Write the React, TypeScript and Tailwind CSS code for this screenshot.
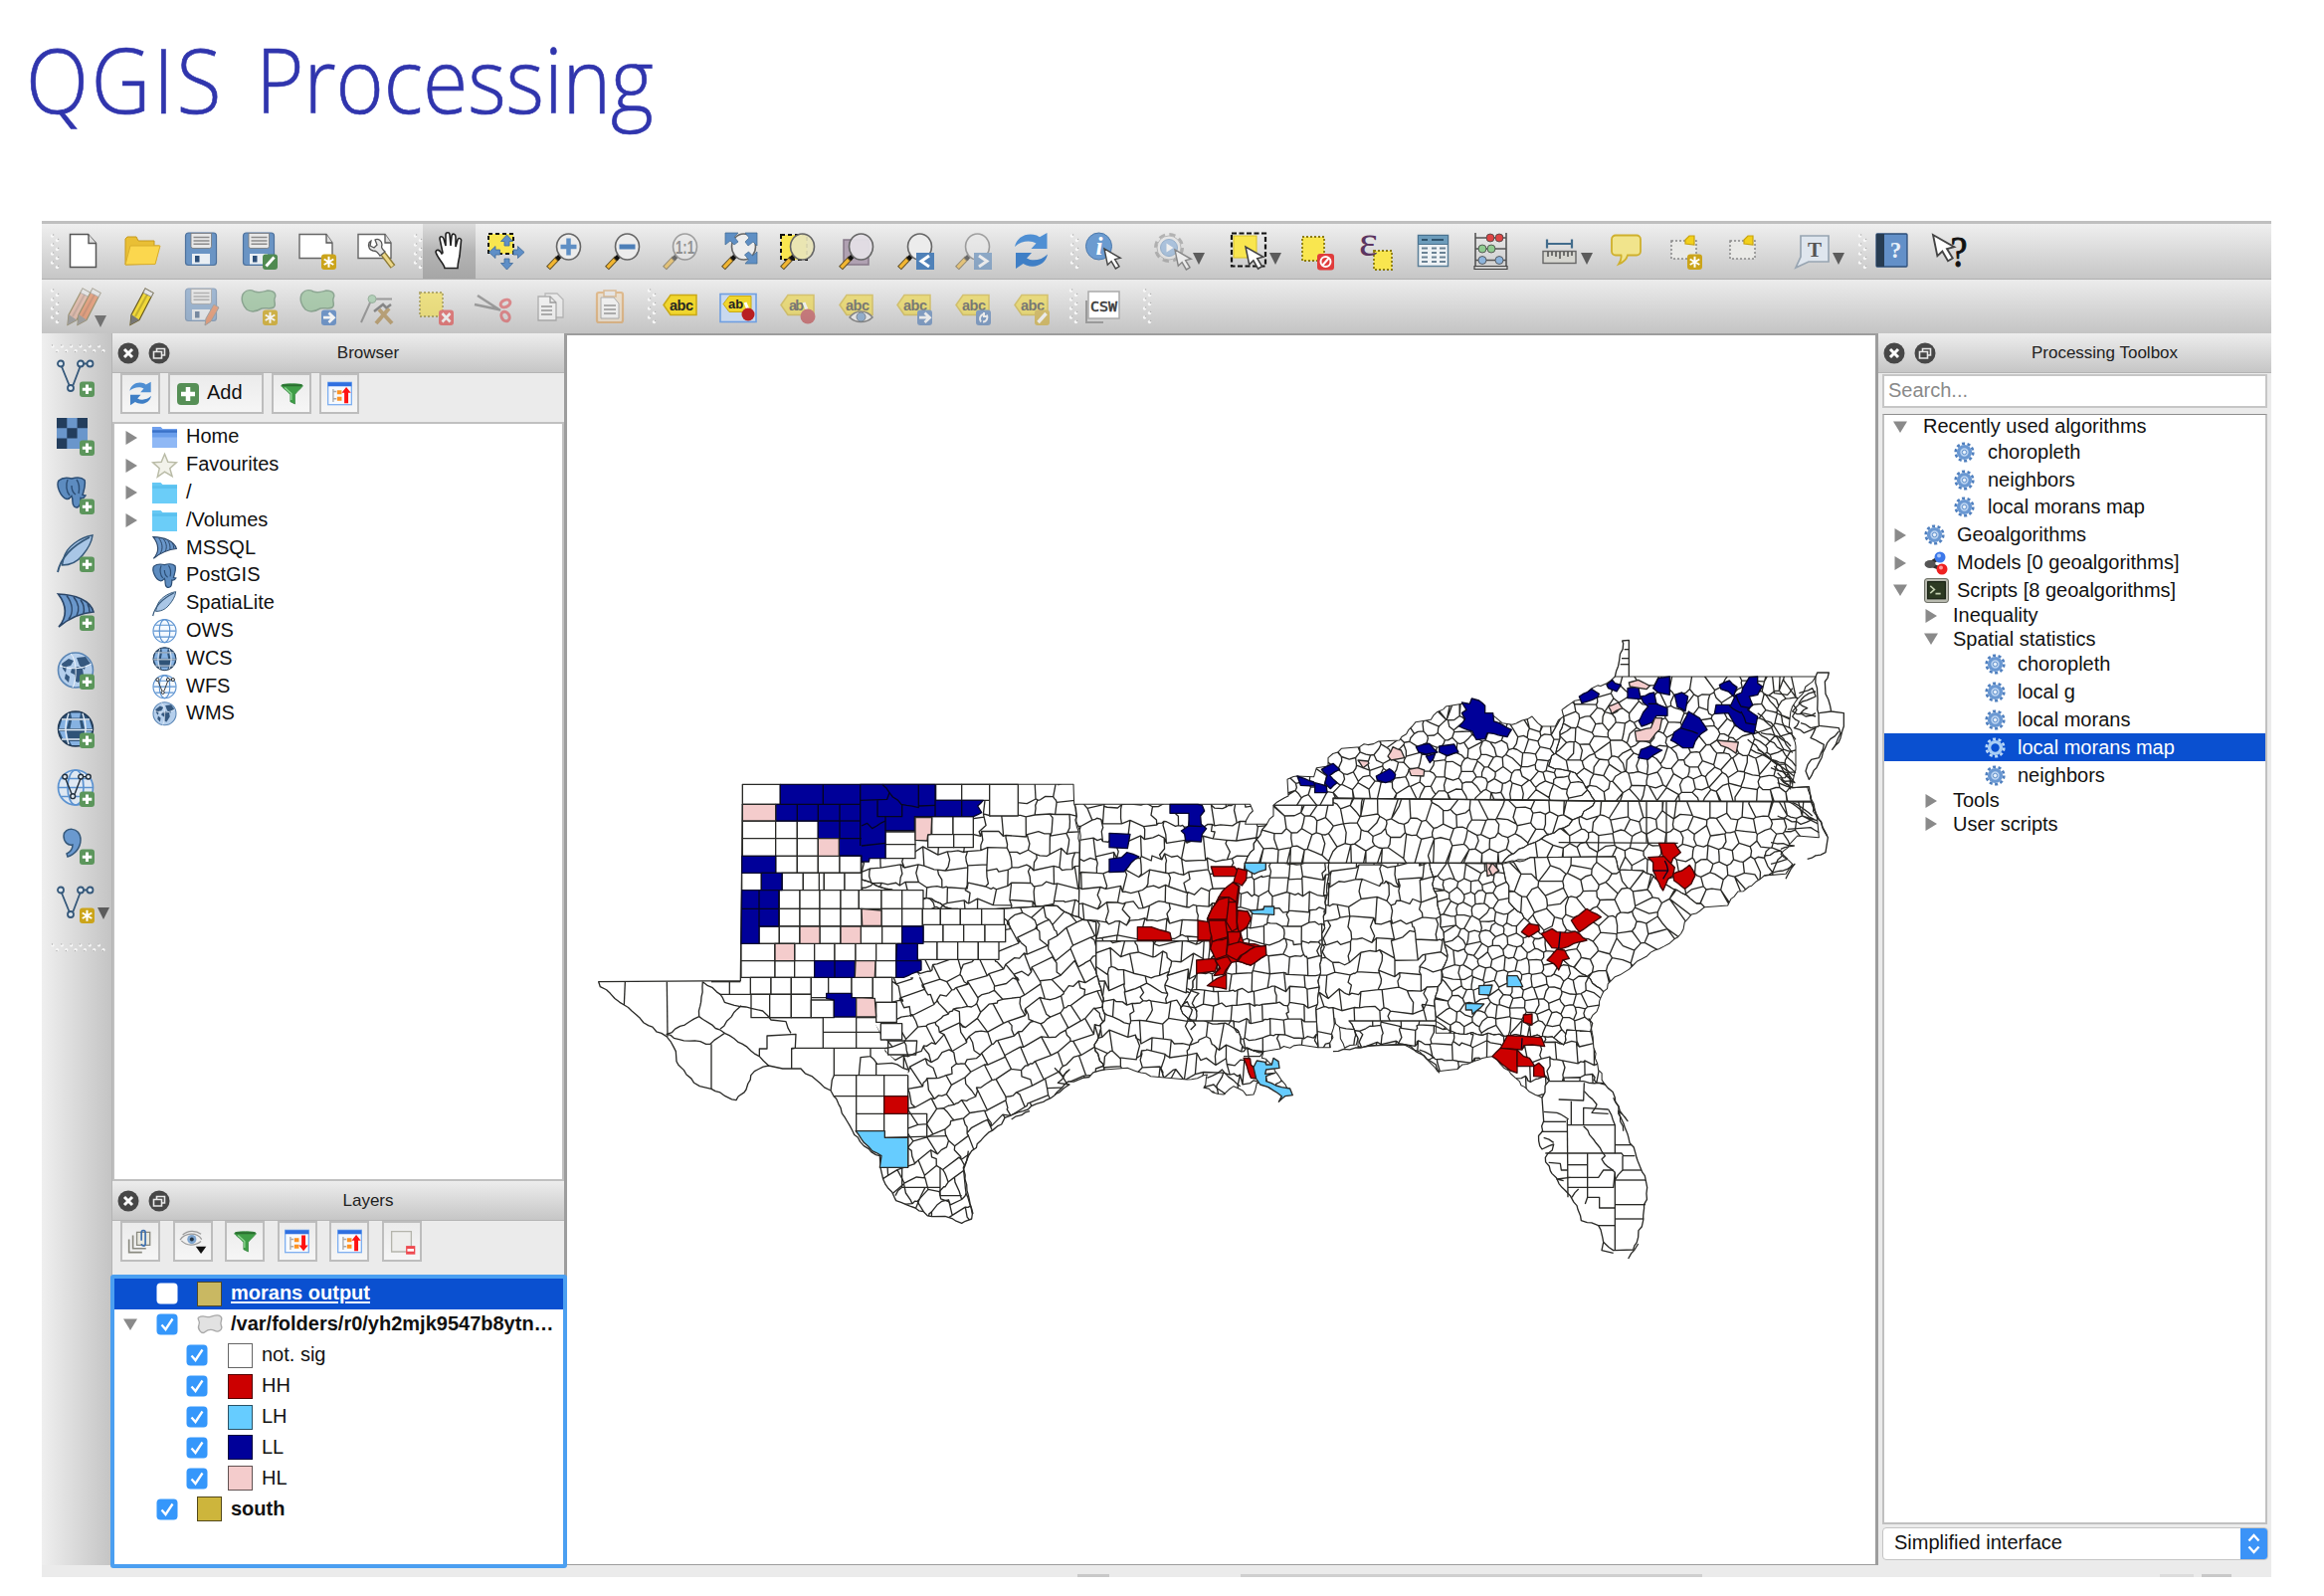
import React from "react";

/* ------------------------------------------------------------------ */
/* Map geometry                                                        */
/* ------------------------------------------------------------------ */

type P = [number, number];

// Sheets of the map: every outline is written in the coordinates of its sheet.
const W: P = [0, 420];
const C: P = [1380, 420];
const N: P = [2730, 0];
const S: P = [2580, 840];

const at = (o: P, s: string): P[] =>
  s.trim().split(/\s+/).map((t) => {
    const [x, y] = t.split(",").map(Number);
    return [x + o[0], y + o[1]] as P;
  });

const hash = (x: number, y: number, k: number) => {
  const v = Math.sin(Math.round(x) * 12.9898 + Math.round(y) * 78.233 + k * 37.719) * 43758.5453;
  return v - Math.floor(v);
};

const f = (n: number) => n.toFixed(1);

// Breaks slanted segments into short wobbling pieces, as rivers and coasts have.
function rough(p: P[], closed = true, amp = 9): string {
  let d = `M${f(p[0][0])} ${f(p[0][1])}`;
  const n = closed ? p.length : p.length - 1;
  for (let i = 0; i < n; i++) {
    const a = p[i];
    const b = p[(i + 1) % p.length];
    const dx = b[0] - a[0];
    const dy = b[1] - a[1];
    const len = Math.hypot(dx, dy);
    if (Math.abs(dx) > 9 && Math.abs(dy) > 9) {
      const k = Math.max(1, Math.round(len / 16));
      for (let j = 1; j < k; j++) {
        const x = a[0] + (dx * j) / k;
        const y = a[1] + (dy * j) / k;
        d += `L${f(x + (hash(x, y, 1) - 0.5) * amp)} ${f(y + (hash(x, y, 2) - 0.5) * amp)}`;
      }
    }
    d += `L${f(b[0])} ${f(b[1])}`;
  }
  return d + (closed ? "Z" : "");
}

const inside = (x: number, y: number, p: P[]) => {
  let r = false;
  for (let i = 0, j = p.length - 1; i < p.length; j = i++) {
    if (p[i][1] > y !== p[j][1] > y && x < ((p[j][0] - p[i][0]) * (y - p[i][1])) / (p[j][1] - p[i][1]) + p[i][0]) r = !r;
  }
  return r;
};

function frame(poly: P[]) {
  const xs = poly.map((q) => q[0]);
  const ys = poly.map((q) => q[1]);
  const cx = (Math.min(...xs) + Math.max(...xs)) / 2;
  const cy = (Math.min(...ys) + Math.max(...ys)) / 2;
  return { cx, cy, r: Math.hypot(Math.max(...xs) - cx, Math.max(...ys) - cy) + 60 };
}

type Grid = [sx: number, sy: number, jit: number, deg: number];

// Irregular counties: Voronoi edges of a jittered, turned grid.
function cells(poly: P[], [sx, sy, jit, deg]: Grid): string {
  const { cx, cy, r } = frame(poly);
  const c = Math.cos((deg * Math.PI) / 180);
  const s = Math.sin((deg * Math.PI) / 180);
  const pts: P[] = [];
  for (let j = -Math.ceil(r / sy); j <= r / sy; j++)
    for (let i = -Math.ceil(r / sx); i <= r / sx; i++) {
      const u = (i + 0.9 * hash(j, 7, 8) + (hash(i, j, 3) - 0.5) * jit) * sx;
      const v = (j + (hash(i, j, 4) - 0.5) * jit) * sy;
      const x = cx + u * c - v * s;
      const y = cy + u * s + v * c;
      if (inside(x, y, poly)) pts.push([x, y]);
    }
  const m = Math.max(sx, sy) * 2.2;
  const seen = new Set<string>();
  let d = "";
  for (const a of pts) {
    let cell: P[] = [[a[0] - m, a[1] - m], [a[0] + m, a[1] - m], [a[0] + m, a[1] + m], [a[0] - m, a[1] + m]];
    for (const b of pts) {
      const dx = b[0] - a[0];
      const dy = b[1] - a[1];
      if (b === a || Math.abs(dx) > 2 * m || Math.abs(dy) > 2 * m) continue;
      const k = (b[0] * b[0] + b[1] * b[1] - a[0] * a[0] - a[1] * a[1]) / 2;
      const side = (q: P) => q[0] * dx + q[1] * dy - k;
      const out: P[] = [];
      for (let i = 0; i < cell.length; i++) {
        const p = cell[i];
        const q = cell[(i + 1) % cell.length];
        const sp = side(p);
        const sq = side(q);
        if (sp <= 0) out.push(p);
        if (sp <= 0 !== sq <= 0) {
          const t = sp / (sp - sq);
          out.push([p[0] + (q[0] - p[0]) * t, p[1] + (q[1] - p[1]) * t]);
        }
      }
      cell = out;
    }
    for (let i = 0; i < cell.length; i++) {
      const p = cell[i];
      const q = cell[(i + 1) % cell.length];
      const len = Math.hypot(p[0] - q[0], p[1] - q[1]);
      if (len < 1) continue;
      const mx = (p[0] + q[0]) / 2;
      const my = (p[1] + q[1]) / 2;
      const key = `${Math.round(mx)},${Math.round(my)}`;
      if (seen.has(key)) continue;
      seen.add(key);
      const w = len > 18 && hash(mx, my, 9) < 0.6 ? len * 0.36 : 0;
      d += `M${f(p[0])} ${f(p[1])}L${f(mx + (hash(mx, my, 5) - 0.5) * w)} ${f(my + (hash(mx, my, 6) - 0.5) * w)}L${f(q[0])} ${f(q[1])}`;
    }
  }
  return d;
}

// Surveyed counties: courses of near-rectangles whose corners are shifted a little.
function courses(poly: P[], [sx, sy, jit, deg]: Grid): string {
  const { cx, cy, r } = frame(poly);
  const c = Math.cos((deg * Math.PI) / 180);
  const s = Math.sin((deg * Math.PI) / 180);
  const nx = Math.ceil(r / sx);
  const ny = Math.ceil(r / sy);
  const place = (u: number, j: number): P => {
    const x = u + (hash(u, j, 11) - 0.5) * jit * sx * 0.5;
    const y = j * sy + (hash(u, j, 12) - 0.5) * jit * sy * 1.1;
    return [cx + x * c - y * s, cy + x * s + y * c];
  };
  const row = (j: number) => {
    const out: number[] = [];
    for (let i = -nx; i <= nx; i++) out.push((i + hash(j, 5, 13) + (hash(i, j, 14) - 0.5) * jit) * sx);
    return out;
  };
  const bend = (a: P, b: P, k: number) => {
    const mx = (a[0] + b[0]) / 2;
    const my = (a[1] + b[1]) / 2;
    const h = hash(mx, my, k);
    if (h > 0.42) return `L${f(b[0])} ${f(b[1])}`;
    const w = Math.hypot(a[0] - b[0], a[1] - b[1]) * 0.34;
    let d = "";
    for (const t of [0.33, 0.66]) {
      const x = a[0] + (b[0] - a[0]) * t;
      const y = a[1] + (b[1] - a[1]) * t;
      d += `L${f(x + (hash(x, y, 15) - 0.5) * w)} ${f(y + (hash(x, y, 16) - 0.5) * w)}`;
    }
    return d + `L${f(b[0])} ${f(b[1])}`;
  };
  let d = "";
  let above = row(-ny - 1);
  for (let j = -ny; j <= ny; j++) {
    const here = row(j);
    const line = [...above, ...here].sort((a, b) => a - b).map((u) => place(u, j));
    d += `M${f(line[0][0])} ${f(line[0][1])}`;
    for (let i = 1; i < line.length; i++) d += bend(line[i - 1], line[i], 17);
    for (const u of here) {
      const a = place(u, j);
      const b = place(u, j + 1);
      d += `M${f(a[0])} ${f(a[1])}${bend(a, b, 18)}`;
    }
    above = here;
  }
  return d;
}

const redRiver = at(W, "828,372 885,395 985,420 1040,430 1080,455 1165,470 1240,460 1330,455 1400,450 1483,485");
const sabine = at(C, "155,500 155,640 170,700 182,780 150,870 180,945");
const texCoast = at(W, "1495,970 1440,990 1400,1030 1330,1065 1260,1090 1250,1110 1200,1145 1160,1190 1135,1240 1140,1290 1162,1380 1160,1395 1130,1408 1080,1387 1040,1388 990,1362 932,1340 893,1275 885,1240");
const missN = at(C, "605,322 600,350 560,400 525,430 490,490 505,557");
const missS = at(C, "505,557 510,600 460,655 440,710 410,760 440,798");
const pearl = at(C, "440,798 570,798 600,880 660,890");
const alGa = at(C, "1160,322 1185,450 1215,600 1175,740 1180,790 1180,835");
const savannah: P[] = [...at(N, "30,745 50,810"), ...at(S, "200,20 270,90 320,130 370,200 430,240 485,290")];
const ncSc = at(N, "130,725 370,722 380,762 455,765 545,820 640,875");
const tnNc = at(N, "30,742 80,700 200,640 270,600 310,555");
const rev = (p: P[]) => [...p].reverse();

const texas: P[] = [
  ...at(W, "469,145 463,677 35,680 40,695 70,715 112,750 160,790 240,845 268,890 270,920 300,960 340,995 375,1003 450,1037 480,1005 505,950 548,933 590,942 645,942 690,975 735,1008 765,1060 800,1128 835,1175 883,1205"),
  ...rev(texCoast),
  ...rev(sabine),
  ...rev(redRiver),
  ...at(W, "824,145"),
];
const texasEast: P[] = [
  ...at(W, "968,1240 968,950 908,900 886,855 872,790 872,740 920,667 1006,667 828,520"),
  ...redRiver,
  ...sabine,
  ...texCoast,
];

type Region = { id: string; p: P[]; fill: (p: P[], g: Grid) => string; g: Grid };

const regions: Region[] = [
  { id: "tx", fill: courses, p: texasEast, g: [64, 50, 0.5, -28] },
  { id: "ok", fill: courses, p: [...at(W, "824,85 1467,85 1469,145 1485,260 1483,485"), ...rev(redRiver)], g: [66, 52, 0.45, 0] },
  { id: "ar", fill: courses, p: [...at(C, "92,145 620,145 628,165 605,205 670,205 640,250 620,290"), ...missN, ...at(C, "155,557 155,500 103,485 107,260")], g: [66, 50, 0.5, 0] },
  { id: "la", fill: courses, p: [...at(C, "155,557"), ...missS, ...pearl, ...at(C, "655,910 690,930 740,1015 640,985 630,1020 608,1022 570,995 540,1020 480,1000 490,960 430,975 370,970 320,965 250,940"), ...rev(sabine)], g: [60, 50, 0.7, 4] },
  { id: "ms", fill: courses, p: [...missN, ...missS, ...pearl, ...at(C, "710,882 770,870 825,878 818,760 835,600 857,322")], g: [54, 48, 0.35, 0] },
  { id: "al", fill: courses, p: [...at(C, "857,322"), ...alGa.slice(0, 5), ...at(C, "1178,798 918,798 945,850 940,870 905,880 875,790 862,878 825,878 818,760 835,600")], g: [66, 54, 0.6, -2] },
  { id: "tn", fill: cells, p: [...at(C, "605,322 620,290 640,250 670,205 690,180 690,148 870,148 870,126"), ...rev(tnNc)], g: [46, 48, 0.65, 10] },
  { id: "ky", fill: cells, p: [...at(C, "690,148 735,120 732,70 760,60 812,62 820,35 855,30 855,5"), [2275, 397], [2330, 392], [2387, 375], [2450, 372], [2499, 317], [2545, 310], [2590, 270], [2640, 262], [2680, 285], ...at(N, "0,295 30,320 60,325 120,300 150,330 190,330 215,300 200,380 170,450 250,470 310,555"), ...at(C, "870,126 870,148")], g: [42, 37, 0.8, 18] },
  { id: "va", fill: cells, p: at(N, "215,300 210,280 235,262 265,250 300,215 345,200 370,180 975,180 940,225 905,270 895,330 915,390 915,460 905,515 950,512 962,556 310,555 250,470 170,450 200,380"), g: [49, 35, 0.85, -28] },
  { id: "nc", fill: cells, p: [...rev(tnNc), ...at(N, "130,725"), ...ncSc, ...at(N, "710,870 720,850 820,780 885,775 905,745 870,715 920,660 985,665 980,610 962,556")], g: [47, 45, 0.65, 0] },
  { id: "sc", fill: cells, p: [...ncSc, ...at(N, "590,910 560,965 490,1005"), ...at(S, "575,210 520,245 485,290"), ...rev(savannah)], g: [58, 44, 0.8, 35] },
  { id: "ga", fill: cells, p: [...at(C, "1160,322"), ...savannah, ...at(S, "465,350 445,375 450,410 375,405 365,450 330,425 40,415"), ...rev(alGa)], g: [38, 36, 0.65, 8] },
  { id: "fl", fill: courses, p: [...at(C, "918,798 1178,798"), ...at(S, "40,415 330,425 365,450 375,405 450,410 460,490 490,570 425,620 320,615 260,590 220,550 150,485"), ...at(C, "1310,915 1230,945 1185,950 1130,890 1080,868 1000,872 945,878 945,850")], g: [54, 52, 0.5, 0] },
];

const florida = at(S, "300,610 305,680 290,740 300,765 335,750 310,790 325,830 360,880 385,905 405,935 418,980 470,995 485,1045 515,1070 575,1068 590,1030 605,980 617,880 610,845 585,790 550,700 520,610 490,570 425,560 320,560 300,610");

// Open county lines, grouped by sheet.
const lines: [P, string][] = [
  [W, "115,680 112,750"], [W, "241,680 243,845"], [W, "349,680 338,785"], [W, "338,785 240,838 262,850 372,868 415,835 338,785"],
  [W, "375,868 375,1003"], [W, "415,835 520,905 548,933"], [W, "402,822 465,752"], [W, "349,680 402,718 415,742 495,760 530,768 555,795 600,800 615,835"],
  [W, "520,905 520,882 543,882 543,843 630,838 628,880 617,882"], [W, "617,880 617,942"], [W, "617,880 908,880"], [W, "745,880 745,962 968,962"],
  [W, "400,718 676,718"], [W, "375,680 463,680"], [W, "430,680 430,718"], [W, "745,962 735,1008"], [W, "745,1025 968,1025"], [W, "812,788 812,880"],
  [W, "712,788 712,880"], [W, "712,832 886,832"], [W, "812,962 812,1130"], [W, "896,962 896,1130"], [W, "812,1078 1025,1078 1025,1148"],
  [W, "898,1150 1085,1145"], [W, "968,962 968,1240"], [W, "855,880 855,905 825,908 820,962"], [W, "855,905 875,928 920,925 968,945"], [W, "872,925 872,960"],
  [W, "955,900 955,940"], [W, "908,858 995,858 992,900 908,900 908,858"], [W, "950,1240 950,1300 1065,1300"],
  [W, "950,1300 930,1325"], [W, "1020,1300 992,1362"], [W, "1065,1240 1065,1325 1130,1325"], [W, "1150,1190 1136,1245 1146,1310 1164,1380"], [W, "1280,1095 1335,1070"],
  [W, "551,788 712,788"], [W, "812,788 872,788"], [W, "588,404 588,352 828,352"], [W, "700,352 700,404"],
  [S, "350,615 425,618 427,565"], [S, "388,620 388,692"], [S, "305,652 345,655 380,675"], [S, "305,682 372,682"], [S, "298,712 376,712"],
  [S, "376,675 378,910"], [S, "376,692 520,692"], [S, "425,692 425,640 500,645"], [S, "427,590 465,630 450,655 500,658"], [S, "425,695 455,735 490,785 480,795 520,835"],
  [S, "500,645 520,692 520,778"], [S, "310,777 540,777 545,785 580,785"], [S, "437,777 437,910 430,930"], [S, "378,812 437,812"], [S, "375,850 470,850 485,828 515,828"],
  [S, "378,880 515,880 520,835"], [S, "520,835 520,1070"], [S, "520,858 612,858"], [S, "520,932 612,932"], [S, "520,975 607,975"], [S, "437,910 473,910 473,942 520,942"],
  [S, "470,995 520,995"], [S, "543,785 543,828 520,858"], [S, "543,828 600,828"], [S, "522,752 570,752"], [S, "320,805 355,808 358,828 378,828"], [S, "365,860 345,855 385,850"], [S, "390,910 410,885"],
  [S, "515,610 535,650 558,680 530,650 545,710"], [S, "560,1095 590,1050"], [S, "485,1045 480,1070 515,1078"], [S, "305,730 335,745"], [S, "440,370 452,385 446,410"],
  [N, "370,180 395,80 392,72 412,70 412,180"], [N, "398,98 412,98"], [N, "390,125 412,125"], [N, "386,143 412,143"],
  [N, "975,180 980,168 1015,168 1003,195 1005,232 1022,285 1060,290 1060,330 1050,365 1025,400 1050,350 1045,335 985,328 975,180"],
  [N, "985,290 1022,285"], [N, "1045,345 1010,380 985,440 955,490 945,465 962,430 985,425 1000,385 960,365 975,335 940,350 910,335 925,315 905,300 918,280 908,265"],
  [N, "975,225 940,240 925,260 950,275 930,290 975,300"], [N, "905,515 955,512 962,560 985,610 1012,665 1005,710 950,730"], [N, "958,530 975,590 1010,660"], [N, "890,555 970,610"], [N, "905,560 940,580 965,600"],
  [N, "820,780 890,760 912,745 885,790"], [N, "820,230 870,290 880,330 915,370"], [N, "800,290 850,330 905,410"], [N, "790,340 850,380 915,450"], [N, "770,370 830,420 910,480"], [N, "800,400 870,450 905,505"],
  [N, "850,450 900,490"], [N, "860,470 900,520"], [N, "845,180 850,230 890,235 905,215"],
  [N, "840,455 890,470 912,500 870,490 905,515 860,500"], [N, "780,400 840,430 880,440 915,470"], [N, "810,350 860,360 900,390"], [N, "925,230 965,215 975,240 935,255 905,285 945,300 975,290"], [N, "930,320 960,335 985,330"],
  [N, "820,720 870,705 890,730 840,745"], [N, "840,680 910,690 870,700"], [N, "890,640 960,635 985,650"], [N, "860,600 930,625 965,610"],
  [N, "0,550 310,555 962,558"], [N, "465,555 465,680"], [N, "525,558 525,680"], [N, "200,680 560,682"],
  [C, "1165,322 1380,322"], [C, "870,128 1380,131"], [C, "870,890 1000,872 1090,870 1180,930 1190,955"], [C, "1130,885 1175,910"],
  [C, "480,998 510,990 545,1018"], [C, "30,1020 75,990 40,985 75,945 55,965 30,940"],
  [C, "660,890 650,905 600,905"], [C, "490,970 535,945 590,995"],
  [C, "410,760 430,740 445,765 435,790 455,810 440,825"], [C, "430,700 465,715 445,745 460,770"],
];

// White counties of the ruled western rows: y range, then the x of each border.
const rows: [number, number, number[]][] = [
  [85, 145, [469, 583]],
  [195, 248, [469, 569, 634, 697]],
  [248, 301, [469, 569, 634, 697]],
  [301, 352, [569, 634, 697, 762, 826]],
  [352, 404, [467, 526]],
  [352, 404, [588, 652, 715, 777, 828]],
  [404, 460, [580, 642, 702, 765, 820]],
  [404, 460, [820, 888, 950, 1014]],
  [460, 513, [580, 642, 702, 765, 828]],
  [460, 513, [888, 950, 1012, 1066, 1126, 1190, 1258]],
  [508, 560, [1014, 1074, 1136, 1200, 1262]],
  [513, 565, [519, 580, 642, 702, 765, 826, 890, 950]],
  [565, 617, [465, 567, 626, 686, 747, 810, 872, 932]],
  [560, 613, [997, 1056, 1118, 1180, 1242]],
  [617, 667, [465, 567, 626, 686]],
  [617, 667, [870, 932]],
  [667, 718, [493, 555, 616, 676]],
  [667, 728, [676, 728, 798, 862]],
  [667, 742, [862, 920]],
  [718, 788, [495, 551, 616, 676]],
  [735, 788, [676, 745]],
  [742, 802, [872, 934]],
  [806, 855, [886, 950]],
  [182, 228, [900, 990]],
  [228, 266, [900, 990]],
  [266, 308, [900, 990]],
  [85, 133, [1052, 1130, 1214]],
  [85, 180, [1214, 1300]],
  [182, 236, [1040, 1104, 1165]],
  [236, 275, [1028, 1106, 1165]],
];

const BLUE = "#000099";
const RED = "#cc0000";
const SKY = "#66ccff";
const PINK = "#f4cccc";

const areas: [string, P, string][] = [
  [BLUE, W, "583,85 1050,85 1050,133 1195,133 1178,150 1190,170 1165,182 988,182 988,224 900,224 900,308 852,308 850,318 828,318 828,300 760,300 760,248 697,248 697,195 569,195 569,145 583,145"],
  [BLUE, W, "467,301 569,301 569,352 467,352"], [BLUE, W, "526,352 588,352 588,404 526,404"],
  [BLUE, W, "467,404 578,404 578,513 519,513 519,565 465,565"], [BLUE, W, "950,513 1014,513 1014,565 950,565"],
  [BLUE, W, "935,565 997,565 997,617 932,617"], [BLUE, W, "932,617 1008,617 1008,645 955,667 932,667"],
  [BLUE, W, "686,617 808,617 808,667 686,667"], [BLUE, W, "722,715 798,715 798,728 812,728 812,786 745,786 745,735 722,730"],
  [PINK, W, "469,145 569,145 569,195 469,195"], [PINK, W, "697,248 760,248 760,301 697,301"], [PINK, W, "990,185 1040,185 1038,235 1028,237 1026,255 990,253"],
  [PINK, W, "828,460 888,465 888,511 830,511"], [PINK, W, "642,513 702,513 702,565 642,565"], [PINK, W, "765,513 826,513 826,565 765,565"],
  [PINK, W, "567,565 626,565 626,617 567,617"], [PINK, W, "810,617 870,617 868,667 808,667"], [PINK, W, "812,728 868,730 872,786 812,786"],
  [RED, W, "896,1025 968,1025 968,1078 896,1078"],
  [SKY, W, "810,1130 898,1130 898,1150 968,1150 968,1240 883,1240 888,1205 860,1190 835,1165"],

  [BLUE, C, "378,145 462,145 475,148 482,165 470,180 472,205 488,218 475,235 472,258 425,255 422,235 412,225 435,210 435,172 378,172"],
  [BLUE, C, "195,232 258,235 250,278 195,275"], [BLUE, C, "195,310 232,305 248,290 285,303 262,320 240,348 195,350"],
  [BLUE, C, "762,60 785,68 812,78 815,90 772,88"], [BLUE, C, "815,80 850,90 852,110 815,110"], [BLUE, C, "835,40 870,22 890,40 860,58 882,80 862,98 845,82 852,58"],
  [BLUE, C, "1000,60 1040,38 1058,55 1055,68 1028,80 1003,72"], [BLUE, C, "1150,0 1178,-8 1172,8 1162,20"], [BLUE, C, "1120,-28 1160,-38 1185,-12 1150,-6 1128,-12"], [BLUE, C, "1190,-30 1235,-36 1248,-12 1215,-2 1190,-12"],
  [PINK, C, "945,12 975,15 978,22 960,35"], [PINK, C, "1035,0 1050,-28 1075,-18 1085,5 1045,12"], [PINK, C, "1098,40 1125,35 1145,42 1143,60 1105,58"], [PINK, C, "1332,322 1350,325 1370,345 1335,362"],
  [RED, C, "495,480 525,425 555,415 568,380 588,392 580,465 612,468 622,490 608,518 590,530 600,562 667,573 668,600 622,630 582,618 563,622 545,658 520,650 530,630 500,580 495,530"],
  [RED, C, "502,333 572,333 582,345 576,362 510,362"], [RED, C, "582,338 610,345 608,372 595,390 570,380"],
  [RED, C, "568,380 585,392 578,440 555,425 525,425 535,408"], [RED, C, "555,425 555,492 492,492 502,465 525,432"],
  [RED, C, "555,440 578,440 580,520 565,528 548,500"], [RED, C, "582,465 612,468 622,490 610,515 585,530 580,500"],
  [RED, C, "462,495 495,500 505,530 500,555 462,555"], [RED, C, "495,495 545,495 552,545 505,560"], [RED, C, "552,530 590,530 590,545 580,568 555,570"],
  [RED, C, "505,560 552,548 548,600 515,612 500,580"], [RED, C, "552,570 590,560 635,575 590,602 580,615 548,598"], [RED, C, "635,575 667,572 668,600 622,630 582,618 595,600"],
  [RED, C, "458,615 512,610 520,628 515,648 458,655"], [RED, C, "515,615 552,605 563,622 540,658 510,662 530,640"], [RED, C, "548,658 548,702 490,692 520,670"],
  [RED, C, "280,515 322,515 378,532 383,555 280,555"], [RED, C, "600,910 620,912 622,930 632,940 638,972 622,970 610,935"],
  [SKY, C, "603,322 667,322 667,342 632,355 605,340"], [SKY, C, "618,465 660,462 662,453 692,453 692,478 628,475"],
  [SKY, C, "630,938 640,918 665,922 668,930 685,930 690,910 705,920 708,940 668,945 665,958 695,955 668,965 668,980 715,998 740,1002 748,1022 725,1025 706,1042 715,1025 675,998 650,990 638,972"],
  [SKY, C, "1310,692 1350,690 1342,720 1310,718"], [SKY, C, "1270,745 1325,747 1290,778 1288,765 1270,765"], [SKY, C, "1395,662 1425,662 1442,695 1395,695"],

  [BLUE, N, "-92,258 -68,262 -62,246 -40,252 -22,268 -22,290 2,290 5,315 30,325 58,340 45,362 5,352 -15,350 -22,368 -48,370 -60,345 -100,330 -82,308 -92,290 -78,280"],
  [BLUE, N, "262,240 300,218 322,232 318,242 270,260"], [BLUE, N, "345,205 362,190 370,200 388,205 375,225 350,215"],
  [BLUE, N, "485,215 500,185 535,180 535,235 500,228"], [BLUE, N, "408,215 440,210 448,248 408,245"],
  [BLUE, N, "448,240 488,228 495,262 528,275 528,298 495,298 482,318 450,330 442,315 455,288 470,270 455,258"], [BLUE, N, "550,235 572,228 590,240 582,285 558,272"],
  [BLUE, N, "592,285 625,305 648,340 630,352 612,375 605,395 575,395 538,372 548,348 568,335"], [BLUE, N, "440,425 448,400 478,388 512,402 498,410 470,430"],
  [BLUE, N, "685,205 715,192 738,212 728,240 712,225 690,218"], [BLUE, N, "755,215 775,182 800,180 800,200 815,210 800,235 775,240 785,265 770,280 800,300 795,325 790,352 760,345 735,328 712,290 670,292 675,265 720,265 735,235 752,228"],
  [PINK, N, "412,198 440,190 475,208 465,218 415,210"], [PINK, N, "350,270 380,258 392,275 360,292"], [PINK, N, "430,345 478,335 490,305 512,305 505,340 475,375 435,375"],
  [PINK, N, "678,372 742,378 735,412 710,395 690,388"], [PINK, N, "0,742 20,765 0,780 -10,760"],
  [RED, N, "502,682 550,682 568,710 545,728 540,742 520,735"], [RED, N, "470,725 518,722 535,740 550,755 545,780 530,790 515,825 495,790 485,765 485,740"], [RED, N, "545,775 572,765 595,748 612,780 600,805 580,820 548,795"],
  [RED, N, "238,915 285,880 328,905 262,950"], [RED, N, "88,950 110,925 140,930 142,945 110,965"],
  [RED, S, "298,115 330,100 345,110 378,112 400,108 435,135 395,145 360,160 330,158"], [RED, S, "345,162 368,165 382,190 362,195 350,225 335,205 315,195"],
  [RED, S, "244,360 270,357 270,390 255,385 244,382"], [RED, S, "195,422 298,428 308,455 270,450 245,452 240,465 175,460"], [RED, S, "175,460 225,465 225,535 205,528 150,485"], [RED, S, "225,465 245,485 262,490 278,515 225,515"], [RED, S, "275,515 290,505 305,520 308,547 275,545"],
];

// Borders inside the filled groups.
const inner: [P, string][] = [
  [W, "712,85 712,145"], [W, "583,145 824,145"], [W, "634,145 634,195"], [W, "697,145 697,195 762,195 762,145"], [W, "762,195 762,248 828,248"], [W, "824,85 824,270"], [W, "762,195 824,195"],
  [W, "824,133 905,130 912,110 890,85"], [W, "912,110 948,145 1000,155 1000,85"], [W, "876,133 876,182 950,182 950,145"], [W, "1000,150 1050,148"], [W, "1050,133 1050,182"], [W, "1130,133 1130,182"], [W, "828,210 845,202 860,218 900,195"], [W, "900,182 900,224"], [W, "828,270 900,262"],
  [W, "519,404 519,513"], [W, "467,460 578,460"], [W, "747,617 747,667"],
  [C, "435,210 475,212"], [N, "568,335 620,352"], [N, "470,262 500,262"], [N, "735,235 750,270 778,275"], [N, "750,285 765,320 795,325"], [N, "715,268 750,290"], [N, "485,765 530,765"], [N, "520,735 530,765 515,790"], [S, "355,110 350,160"], [S, "240,430 238,462"],
];

const INK = "#2a2a27";

function SouthMap() {
  return (
    <svg className="block h-[1235px] w-[1315px]" viewBox="-60 -849 3945 3705" fill="none" stroke={INK} strokeWidth="4" strokeLinejoin="round">
      <defs>
        {regions.map((r) => (
          <clipPath key={r.id} id={`clip-${r.id}`}>
            <path d={rough(r.p)} />
          </clipPath>
        ))}
      </defs>
      {regions.map((r) => (
        <g key={r.id}>
          <path d={r.fill(r.p, r.g)} clipPath={`url(#clip-${r.id})`} />
          {r.id !== "tx" && <path d={rough(r.p)} strokeWidth="3.2" />}
        </g>
      ))}
      <path d={rough(texas)} />
      <path d={rough(florida)} fill="#fff" />
      {rows.map(([y0, y1, xs], i) =>
        xs.slice(1).map((x, j) => <rect key={`${i}-${j}`} x={xs[j]} y={y0 + 420} width={x - xs[j]} height={y1 - y0} fill="#fff" />)
      )}
      {lines.map(([o, s], i) => (
        <path key={i} d={rough(at(o, s), false, 6)} />
      ))}
      {areas.map(([c, o, s], i) => (
        <path key={i} d={rough(at(o, s), true, 3)} fill={c} stroke={c === PINK || c === SKY ? INK : c === RED ? "#3d0505" : "#05052c"} />
      ))}
      {inner.map(([o, s], i) => (
        <path key={i} d={rough(at(o, s), false, 4)} stroke="#050520" />
      ))}
    </svg>
  );
}

/* ------------------------------------------------------------------ */
/* Icons                                                               */
/* ------------------------------------------------------------------ */

type Kids = { children?: React.ReactNode };

const Ic = ({ children, dim }: Kids & { dim?: boolean }) => (
  <svg className={dim ? "block size-[38px] shrink-0 overflow-visible opacity-55" : "block size-[38px] shrink-0 overflow-visible"} viewBox="0 0 38 38" fill="none">
    {children}
  </svg>
);

const Badge = ({ c, children }: Kids & { c: string }) => (
  <g transform="translate(23 22.5)">
    <rect width="15" height="15.5" rx="3" fill={c} />
    {children}
  </g>
);
const Plus = () => (
  <Badge c="#5c965c">
    <path d="M7.5 3v9.5M2.8 7.7h9.5" stroke="#fff" strokeWidth="3" />
  </Badge>
);
const Star = () => (
  <Badge c="#cba41a">
    <path d="M7.5 2.2v11M2.7 5l9.6 5.5M12.3 5l-9.6 5.5" stroke="#fff" strokeWidth="2" />
  </Badge>
);
const Lens = ({ children, fill = "#ececec" }: Kids & { fill?: string }) => (
  <>
    <path d="M3 36.5 13 26" stroke="#5b4a22" strokeWidth="5.4" />
    <path d="M3.6 35.8 11 28" stroke="#f2b632" strokeWidth="3.4" />
    <path d="M12 27.5l4-4.5" stroke="#111" strokeWidth="4.4" />
    <ellipse cx="23.5" cy="15" rx="12" ry="13" fill={fill} stroke="#666" strokeWidth="1.6" />
    {children}
  </>
);
const Disk = () => (
  <>
    <rect x="3.5" y="1" width="31" height="32.5" rx="3" fill="#6a94c4" stroke="#4d719c" strokeWidth="1.2" />
    <path d="M9 1.5h20.500v13a2 2 0 0 1-2 2h-16.500a2 2 0 0 1-2-2z" fill="#e8e8e8" stroke="#777" strokeWidth=".8" />
    <path d="M11.500 5.500h16M11.500 9h16M11.500 12.300h16" stroke="#8a8a8a" strokeWidth="1.500" />
    <path d="M10 22h18v10.500h-18z" fill="#e9eef3" />
    <path d="M13 24h4.500v6.500h-4.500z" fill="#2d4f78" />
  </>
);
const Page = () => (
  <>
    <path d="M1 2.500h27l6 8.500v15.500h-33z" fill="#fff" stroke="#666" strokeWidth="1.400" />
    <path d="M28 2.500v8.500h6" fill="#ddd" stroke="#555" strokeWidth="1.300" />
  </>
);
const Pointer = ({ x, y, s = 1 }: { x: number; y: number; s?: number }) => (
  <path transform={`translate(${x} ${y}) scale(${s})`} d="M0 0l3.500 17 4-3.800 4.500 7.800 3.800-2.200-4.600-7.600 5.800-1.400z" fill="#fff" stroke="#444" strokeWidth="1.500" />
);
const YBox = ({ x = 2, y = 2, w = 24, h = 24, c = "#f9e64f", s = "#8a7a10" }) => (
  <rect x={x} y={y} width={w} height={h} fill={c} stroke={s} strokeWidth="1.800" strokeDasharray="2 2" />
);
const Refresh = () => (
  <>
    <path d="M2 15C4 5 14 0 24 3.500l3 1.800L34.500 1v16H18.500l5-5.500C18 8 8 9 2 15z" fill="#4f8fd3" />
    <path d="M35 22.500c-2 10-12 14.500-21.500 11l-3-1.500-7.500 5V21h16l-5 5.500c6 3.500 15 2 21-4z" fill="#3f7fc6" />
  </>
);
const V = ({ c = "#35587a" }) => (
  <g stroke={c} strokeWidth="1.800">
    <path d="M5 7.500 12.500 26M16.500 26l7-18.500M27 4.500h4" />
    <circle cx="4" cy="4.500" r="3" fill="#dfe7ee" />
    <circle cx="24" cy="4.500" r="3" fill="#dfe7ee" />
    <circle cx="33.500" cy="4.500" r="3" fill="#dfe7ee" />
    <circle cx="14" cy="29" r="3" fill="#dfe7ee" />
  </g>
);
const Elephant = () => (
  <>
    <path d="M2 4c4-3.500 9-3 13-2 5-1.500 10-1.500 13 1.500 1.500 5-1 11-2 15l3 .5c-1 2-3 3-5 2.500 0 4 .5 7-2.500 9-3 1.500-5.500-1-5.500-5 0-3-.5-5-1-6-2 2.500-3 3.500-5 3C4 21-1 9 2 4z" fill="#5d8cc0" stroke="#2b4d74" strokeWidth="1.500" />
    <path d="M11 3c-2 5-1.500 12 2 16M20 3c3 4 3 9 2 14M15 9c0 4 1 7 4 9" stroke="#2b4d74" strokeWidth="1.400" />
  </>
);
const Feather = () => (
  <>
    <path d="M36 1C24 3 10 12 7 24c-1 3-1 5-1.500 7C16 31 22 26 26 21c5-6 9-12 10-20z" fill="#a9c6e6" stroke="#35587a" strokeWidth="1.500" />
    <path d="M1 38c3-14 14-26 32-35" stroke="#35587a" strokeWidth="1.900" />
  </>
);
const Shark = () => (
  <>
    <path d="M1.500 1C18 1.500 34 7 37 19c-13 1-24 6-35 15C11 24 10 12 1.500 1z" fill="#6a97cb" stroke="#2b4668" strokeWidth="1.700" />
    <path d="M10 2.500c6 8 7 17 2 24M17 4c5 6 6 13 3 19M24 7c3 4 4 9 3 13.500M31 11c1.500 2.500 2 5 2 8" stroke="#2b4668" strokeWidth="1.500" />
  </>
);
const GlobeGrid = ({ c = "#5b92d0", fill = "#dce9f8" }) => (
  <g stroke={c} strokeWidth="1.700">
    <circle cx="19" cy="18.500" r="17.500" fill={fill} />
    <ellipse cx="19" cy="18.500" rx="8" ry="17.500" />
    <path d="M2 18.500h34M5 9.500h28M5 27.500h28" />
  </g>
);
const GlobeDark = () => (
  <>
    <circle cx="19" cy="18.500" r="17.500" fill="#2f5378" stroke="#223a55" strokeWidth="1.500" />
    <path d="M5 10h7l-2 8H2.500zM15 10h8l1.500 8h-11zM26 10h7l2.500 8H28zM3 21h7l1.500 7H6zM28 21h7l-3 7h-5.500zM14 2.500h10l-1 5h-8zM13 31h12l-2 4h-8z" fill="#86b2e2" />
    <path d="M2 19.500h34M5 9h28M5 29h28M12 3c-4 10-4 21 0 31M26 3c4 10 4 21 0 31" stroke="#e6eef6" strokeWidth="1.400" />
  </>
);
const GlobeLand = () => (
  <>
    <circle cx="19" cy="18.500" r="17.500" fill="#b5cfec" stroke="#5b86b5" strokeWidth="1.600" />
    <path d="M5 12l7-5 5 2-3 5-4 1-1 6-3-4zM15 17l6-2 5 2 1 6-5 8-3-1-1-7-4-2zM20 6l9-1 5 7-5 2-1 4-5-4zM9 22l4 3-1 6-4-4z" fill="#35587f" />
    <path d="M14 2c6 5 7 25 2 34M3 14c10 4 22 4 32-2" stroke="#eef5fc" strokeWidth="1" />
  </>
);
const Funnel = () => (
  <>
    <path d="M2.500 7c0-4 33-4 33 0 0 2-12 12-12 14v14l-7-3.500V21c0-2-14-12-14-14z" fill="#3f9e47" stroke="#2b7f35" strokeWidth="1" />
    <path d="M4 6.500h30" stroke="#2a6e30" strokeWidth="3" />
    <path d="M8 10l10 9v10" stroke="#8fd694" strokeWidth="2" />
  </>
);
const TreeIc = ({ up }: { up?: boolean }) => (
  <>
    <rect x="1" y="2" width="36" height="34" fill="#f7faff" stroke="#7fb0f0" strokeWidth="2" />
    <path d="M1 2h36v6H1z" fill="#2f6fe0" />
    <path d="M9 12v20M9 16h5M9 27h5" stroke="#aaa" strokeWidth="2" />
    <path d="M15 14h7v6h-7zM15 24h7v6h-7z" fill="#ff9320" />
    {up ? <path d="M29 9l7 9h-4v16h-6V18h-4z" fill="#f11" /> : <path d="M29 34l7-9h-4V10h-6v15h-4z" fill="#f11" />}
  </>
);
const Tag = ({ t = "abc" }) => (
  <>
    <path d="M3 17.500 10 7.500h26v20H10z" fill="#f0d62e" stroke="#c9a916" strokeWidth="1.500" />
    <text x={t === "abc" ? 9 : 11} y="23" fontSize="14.500" fontWeight="bold" fill="#2a2a22" textLength={t === "abc" ? 24 : 15} fontFamily="Liberation Sans, sans-serif">
      {t}
    </text>
  </>
);
const Blob = () => (
  <path d="M3 7c3-5 8-5 12-3 5 2 9 0 13-1 7 0 9 4 7 8-1 3 2 7-1 9-4 2-8 0-12 1-5 3-11 4-15 1C3 18 1 12 3 7z" fill="#90bf94" stroke="#61886a" strokeWidth="1.500" />
);
const Pencil = ({ x = 0, c = "#f0d83a" }) => (
  <g transform={`translate(${x} 0)`}>
    <path d="M21 1l8 4.500-14 27-9 5 1-10z" fill={c} stroke="#6b5b20" strokeWidth="1.200" />
    <path d="M7 27l8 5.500-9 5z" fill="#777" />
    <path d="M21 1l8 4.500-2 3.800-8-4z" fill="#e6e6e6" stroke="#888" strokeWidth=".8" />
    <path d="M23 7l-12 22" stroke="#00000030" strokeWidth="2" />
  </g>
);

const Gear = ({ light }: { light?: boolean }) => (
  <svg className="block size-[21px] shrink-0" viewBox="0 0 21 21" fill="none">
    <circle cx="10.500" cy="10.500" r="8.800" stroke={light ? "#bcd8f6" : "#4f7fbe"} strokeWidth="2.600" strokeDasharray="3.100 2.430" />
    <circle cx="10.500" cy="10.500" r="5.900" fill={light ? "#0a50d0" : "#b9d2f0"} stroke={light ? "#a8cdf5" : "#6a98d2"} strokeWidth="3.400" />
    <circle cx="10.500" cy="10.500" r="2.200" fill={light ? "#0a50d0" : "#e8f1fb"} stroke={light ? "none" : "#5e8fcc"} />
  </svg>
);

const Drop = ({ className = "" }) => (
  <svg className={`block h-[12px] w-[12px] shrink-0 ${className}`} viewBox="0 0 12 12">
    <path d="M0 0h12L6 12z" fill="#5c5c5c" />
  </svg>
);
const Grip = ({ className = "" }) => (
  <svg className={`block h-[38px] w-[10px] shrink-0 ${className}`} viewBox="0 0 10 38">
    {[1, 10, 19, 28].map((y) => (
      <g key={y}>
        <circle cx="2.500" cy={y + 2} r="1.700" fill="#f8f8f8" />
        <circle cx="3.500" cy={y + 1} r=".8" fill="#b0b0b0" />
        <circle cx="7.500" cy={y + 6.500} r="1.700" fill="#f8f8f8" />
        <circle cx="8.500" cy={y + 5.500} r=".8" fill="#b0b0b0" />
      </g>
    ))}
  </svg>
);
const HGrip = () => (
  <svg className="block h-[10px] w-[56px]" viewBox="0 0 56 10">
    {[0, 1, 2, 3, 4, 5].map((i) => (
      <g key={i}>
        <circle cx={3 + i * 9.300} cy="3" r="1.600" fill="#f8f8f8" />
        <circle cx={2.500 + i * 9.300} cy="2" r=".7" fill="#aaa" />
        <circle cx={7.500 + i * 9.300} cy="7.500" r="1.600" fill="#f8f8f8" />
        <circle cx={7 + i * 9.300} cy="8.500" r=".7" fill="#aaa" />
      </g>
    ))}
  </svg>
);

/* ------------------------------------------------------------------ */
/* Toolbars                                                            */
/* ------------------------------------------------------------------ */

const serif = "Liberation Serif, serif";
const sans = "Liberation Sans, sans-serif";

function MainToolbar() {
  return (
    <div className="flex h-[55px] items-center bg-linear-to-b from-[#efefef] to-[#c6c6c6] pl-2">
      <Grip />
      <div className="mb-[2px] ml-[5px] flex gap-[20.800px]">
        <Ic>
          <path d="M5.500 2.500h18l8 9V35.500h-26z" fill="#fff" stroke="#555" strokeWidth="1.500" />
          <path d="M24 2.500v9h7.500" fill="#ddd" stroke="#555" strokeWidth="1.400" />
        </Ic>
        <Ic>
          <path d="M2 33V7l2-2h9l2 4h16v5h5l-4 18z" fill="#e9bf35" stroke="#c69a20" strokeWidth="1" />
          <path d="M2 33l5-19h30l-5 18.500z" fill="#fbd74e" stroke="#d8ae2c" strokeWidth="1" />
        </Ic>
        <Ic><Disk /></Ic>
        <Ic>
          <Disk />
          <Badge c="#4f8a50"><path d="M3.500 12l8-9" stroke="#fff" strokeWidth="3" /></Badge>
        </Ic>
        <Ic><Page /><Star /></Ic>
        <Ic>
          <Page />
          <path d="M26 22l10 13" stroke="#8d7a35" strokeWidth="6" />
          <path d="M26 22l9.500 12.500" stroke="#ecd788" strokeWidth="3" />
          <path d="M14 9c-4 2-3 9 2 10 3 0 4 1 7 5l5-4c-3-3-4-4-3-7 0-4-4-7-7-5l2 5-3 3-4-2z" fill="#e6e6e6" stroke="#555" strokeWidth="1.300" />
        </Ic>
      </div>
      <Grip className="ml-[18px]" />
      <div className="flex h-full w-[53px] items-center justify-center bg-linear-to-b from-[#dcdcdc] via-[#b4b4b4] to-[#a6a6a6]">
        <Ic>
          <path transform="translate(2 -1)" d="M13 36.500C12 31 5 26 4 20c1-3 4-2 6 2l1-1L8 7c0-3 3-3 4 0l2 7L14 3c0-3 4-3 4 0l1 11 1-10c1-3 4-2 4 1v10l2-7c1-3 4-1 3.500 1L28 24c-1 5-2 8-2 12.500z" fill="#fff" stroke="#222" strokeWidth="1.600" />
        </Ic>
      </div>
      <div className="mb-[2px] ml-[11px] flex gap-[20.800px]">
        <Ic>
          <rect x="2" y="2" width="25" height="20" fill="#f9e64f" stroke="#111" strokeWidth="2" strokeDasharray="4 3" />
          <path d="M20.500 3l6 6.500h-3.500v4.500h-5V9.500h-3.500zM20.500 38l6-6.500h-3.500V27h-5v4.500h-3.500zM2.500 20.500l6.500-6v3.500h4.500v5H9v3.500zM38 20.500l-6.500-6v3.500H27v5h4.500v3.500z" fill="#5f8fc7" stroke="#3f6a9a" strokeWidth=".8" />
        </Ic>
        <Ic><Lens><path d="M23.500 6.500v17M15.500 15h16" stroke="#5f8fc4" strokeWidth="4.500" /></Lens></Ic>
        <Ic><Lens><path d="M15.500 15h16" stroke="#4d7fb8" strokeWidth="5" /></Lens></Ic>
        <Ic dim><Lens><text x="23.500" y="21.500" fontSize="19" fontWeight="bold" textAnchor="middle" fill="#555" textLength="19" lengthAdjust="spacingAndGlyphs" fontFamily={sans}>1:1</text></Lens></Ic>
        <Ic>
          <Lens />
          <path d="M5 1h13l-4 4 4 5-4 3-4-4-5 4zM37 1v13l-4-4-5 4-3-4 4-4-4-5zM37 32h-12l3.500-4-4-5 4-3 4 4 4.500-4z" fill="#5f8fc4" stroke="#41698f" strokeWidth=".7" />
        </Ic>
        <Ic>
          <rect x="2" y="3" width="26" height="25" fill="#f9e64f" stroke="#111" strokeWidth="2" strokeDasharray="4 3" />
          <Lens fill="#e9e4b9ee" />
        </Ic>
        <Ic>
          <path d="M6 8h25v25H6z" fill="#b0a1b2" stroke="#867889" strokeWidth="1.500" />
          <Lens fill="#e4dfe6f2" />
        </Ic>
        <Ic><Lens /><rect x="20" y="21" width="18" height="17" fill="#4f81b8" /><path d="M33 24l-8 5.500 8 5.500" stroke="#fff" strokeWidth="3" /></Ic>
        <Ic dim><Lens /><rect x="20" y="21" width="18" height="17" fill="#4f81b8" /><path d="M25 24l8 5.500-8 5.500" stroke="#fff" strokeWidth="3" /></Ic>
        <Ic><Refresh /></Ic>
      </div>
      <Grip className="ml-[19px]" />
      <div className="mb-[2px] ml-[5px] flex">
        <Ic>
          <ellipse cx="14.500" cy="14.500" rx="13" ry="13.500" fill="#6b9bd0" stroke="#4a78ab" />
          <text x="15" y="23" fontSize="25" fontStyle="italic" fontWeight="bold" textAnchor="middle" fill="#fff" fontFamily={serif}>i</text>
          <Pointer x={20} y={17} s={0.95} />
        </Ic>
      </div>
      <div className="mb-[2px] ml-[32px] flex items-center">
        <Ic dim>
          <circle cx="15" cy="16" r="13" stroke="#8a8a8a" strokeWidth="4" strokeDasharray="6 4.200" />
          <circle cx="15" cy="16" r="12" fill="#e8e8e8" stroke="#999" />
          <circle cx="15" cy="16" r="8.500" fill="#7fa9d8" stroke="#5d8abb" />
          <path d="M12.500 11.500l7 4.500-7 4.500z" fill="#fff" />
          <Pointer x={21} y={18} s={0.95} />
        </Ic>
        <Drop className="mt-4 ml-[1px]" />
      </div>
      <div className="mb-[2px] ml-[25px] flex items-center">
        <Ic>
          <rect x="2" y="1.500" width="34" height="33" stroke="#111" strokeWidth="2.200" strokeDasharray="5 2.500" />
          <rect x="4" y="4" width="23" height="22" fill="#f9e64f" stroke="#d8c228" />
          <Pointer x={16} y={15} s={1.050} />
        </Ic>
        <Drop className="mt-4 ml-[2px]" />
      </div>
      <div className="mb-[2px] ml-[18px] flex gap-[20px]">
        <Ic>
          <YBox x={3} y={5} w={22} h={24} />
          <rect x="18" y="22" width="17" height="16.500" rx="3" fill="#e03c3c" />
          <circle cx="26.500" cy="30" r="5" stroke="#fff" strokeWidth="2" />
          <path d="M23 34l7-8" stroke="#fff" strokeWidth="2" />
        </Ic>
        <Ic>
          <YBox x={17} y={19} w={18} h={19} />
          <text x="2" y="24" fontSize="45" fill="#5c3560" fontFamily={serif}>ε</text>
        </Ic>
        <Ic>
          <rect x="3.500" y="3.500" width="30" height="31" fill="#eef2f5" stroke="#5b7f98" strokeWidth="1.500" />
          <path d="M3.500 3.500h30v9h-30z" fill="#6c9cbb" stroke="#4a728f" />
          <path d="M7 8h6M17 8h12" stroke="#2e536d" strokeWidth="2" />
          <path d="M7 16.500h6M17 16.500h5M25 16.500h6M7 21h6M17 21h5M25 21h6M7 25.500h6M17 25.500h5M25 25.500h6M7 30h6M17 30h5M25 30h6" stroke="#6a8294" strokeWidth="1.800" />
        </Ic>
        <Ic>
          <path d="M3 1v34M34 1v34M3 6h31M3 17h31M3 28.500h31" stroke="#555" strokeWidth="1.600" />
          <path d="M2 34.500h33v3H2z" fill="#ccc" stroke="#444" strokeWidth="1.200" />
          <g stroke="#444" strokeWidth=".8">
            <circle cx="18" cy="6" r="4" fill="#dc4444" /><circle cx="27" cy="6" r="4" fill="#dc4444" />
            <circle cx="10" cy="17" r="4" fill="#8fca8f" /><circle cx="19" cy="17" r="4" fill="#8fca8f" />
            <circle cx="10" cy="28.500" r="4" fill="#8db4dc" /><circle cx="27" cy="28.500" r="4" fill="#8db4dc" />
          </g>
        </Ic>
      </div>
      <div className="mb-[2px] ml-[31px] flex items-center">
        <Ic>
          <path d="M6 12h25M6 7.500v9M31 7.500v9" stroke="#426c8c" strokeWidth="2.200" />
          <rect x="2" y="19.500" width="33" height="12" fill="#d6d6d0" stroke="#666" strokeWidth="1.400" />
          <path d="M7 20v5M11 20v4M15 20v5M19 20v7M23 20v4M27 20v5M31 20v4" stroke="#444" strokeWidth="1.400" />
        </Ic>
        <Drop className="mt-4 ml-[2px]" />
      </div>
      <div className="mb-[2px] ml-[15px] flex gap-[21.500px]">
        <Ic>
          <path d="M8 3.500h21a4 4 0 0 1 4 4v12a4 4 0 0 1-4 4H20c-1 4-4 7-9 9 2-3 3-6 2.500-9H8a4 4 0 0 1-4-4v-12a4 4 0 0 1 4-4z" fill="#f1e48c" stroke="#cfb02c" strokeWidth="1.800" />
        </Ic>
        <Ic>
          <rect x="4" y="9" width="25" height="18" fill="#e9e9e6" stroke="#888" strokeWidth="1.500" strokeDasharray="2 2" />
          <path d="M18 12V8l4-4h5v9z" fill="#f2d01c" stroke="#c9a40e" strokeWidth="1.200" />
          <g transform="translate(-3 0)"><Star /></g>
        </Ic>
        <Ic>
          <rect x="4" y="9" width="25" height="18" fill="#e9e9e6" stroke="#888" strokeWidth="1.500" strokeDasharray="2 2" />
          <path d="M18 12V8l4-4h5v9z" fill="#f2d01c" stroke="#c9a40e" strokeWidth="1.200" />
        </Ic>
      </div>
      <div className="mb-[2px] ml-[30px] flex items-center">
        <Ic>
          <path d="M7 4h28v26H15L2 36l5-11z" fill="#dfe6ee" stroke="#98a5b2" strokeWidth="1.700" />
          <text x="21" y="24.500" fontSize="21" fontWeight="bold" textAnchor="middle" fill="#555" fontFamily={serif}>T</text>
        </Ic>
        <Drop className="mt-4 ml-[1px]" />
      </div>
      <Grip className="ml-[13px]" />
      <div className="mb-[2px] ml-[6px] flex gap-[20.500px]">
        <Ic>
          <rect x="3" y="2" width="31" height="33" rx="1" fill="#6390c8" stroke="#2e4f7a" strokeWidth="1.300" />
          <path d="M3 2h8v33H3z" fill="#273c52" />
          <text x="22.500" y="26" fontSize="23" fontWeight="bold" textAnchor="middle" fill="#e8f0fa" fontFamily={serif}>?</text>
        </Ic>
        <Ic>
          <Pointer x={1} y={3} s={1.250} />
          <text x="27" y="35" fontSize="44" textAnchor="middle" fill="#111" stroke="#111" strokeWidth=".9" textLength="17" lengthAdjust="spacingAndGlyphs" fontFamily={serif}>?</text>
        </Ic>
      </div>
    </div>
  );
}

function EditToolbar() {
  return (
    <div className="flex h-[54px] items-center bg-linear-to-b from-[#ececec] to-[#c4c4c4] pl-2">
      <Grip />
      <div className="mb-px ml-[5px] flex items-center gap-[20.800px]">
        <div className="relative">
          <Ic dim><Pencil x={-3} c="#e2a58c" /><Pencil x={7} c="#e8743c" /></Ic>
          <Drop className="absolute top-[28px] left-[30px] opacity-80" />
        </div>
        <Ic><Pencil x={1} /></Ic>
        <Ic dim><Disk /><path d="M32 17l5 3-8 14-6 4 1-7z" fill="#e8743c" stroke="#777" /></Ic>
        <Ic><g opacity=".65"><Blob /></g><g opacity=".75"><Star /></g></Ic>
        <Ic><g opacity=".65"><Blob /></g><g opacity=".75"><Badge c="#4f7fc0"><path d="M2 7.700h9M7.500 3l5 4.700-5 4.700" stroke="#fff" strokeWidth="2.800" /></Badge></g></Ic>
        <Ic dim>
          <path d="M4 35L14 13M17 11.500h18" stroke="#666" strokeWidth="2" />
          <circle cx="15" cy="11.500" r="4" fill="#8fc49a" stroke="#5f8a68" />
          <path d="M19 36l13-15M22 22l13 14" stroke="#a0762c" strokeWidth="4" />
          <path d="M17 24l9-7 4 4M30 20l4-3" stroke="#444" strokeWidth="2.500" />
        </Ic>
        <Ic dim><YBox x={4} y={5} w={23} h={24} c="#f7e038" /><Badge c="#e03434"><path d="M3.500 3.500l8 8.500M11.500 3.500l-8 8.500" stroke="#fff" strokeWidth="2.600" /></Badge></Ic>
        <Ic dim>
          <path d="M0 17l24 5M3 8l23 15" stroke="#666" strokeWidth="2.600" />
          <ellipse cx="31" cy="16" rx="5" ry="3.500" transform="rotate(-25 31 16)" stroke="#d8454a" strokeWidth="3" />
          <ellipse cx="31" cy="29" rx="3.800" ry="5" transform="rotate(-30 31 29)" stroke="#d8454a" strokeWidth="3" />
        </Ic>
        <Ic dim>
          <path d="M13 6h12l6 6v18H13z" fill="#f4f4f4" stroke="#999" strokeWidth="1.300" />
          <path d="M6 9h12l6 6v18H6z" fill="#fff" stroke="#888" strokeWidth="1.300" />
          <path d="M9 19h11M9 23h11M9 27h11M18 9v6h6" stroke="#666" strokeWidth="1.300" />
        </Ic>
        <Ic dim>
          <rect x="6" y="5" width="26" height="30" rx="2" fill="#f1ddc0" stroke="#dd9a4a" strokeWidth="2.200" />
          <path d="M13 3h12v6H13z" fill="#e8e8e8" stroke="#d39a55" strokeWidth="1.500" />
          <path d="M10 10h13l5 6v15H10z" fill="#fff" stroke="#888" />
          <path d="M13 18h12M13 22h12M13 26h12" stroke="#666" strokeWidth="1.400" />
        </Ic>
      </div>
      <Grip className="ml-[18px]" />
      <div className="mb-px ml-[4px] flex items-center gap-[20.800px]">
        <Ic><Tag /></Ic>
        <Ic>
          <rect x="1" y="6.500" width="36" height="28" fill="#c9d9ef" stroke="#6f9fe0" strokeWidth="1.600" />
          <g transform="translate(0 -1)"><path d="M4 17.500 10 9.500h22v16H10z" fill="#f0d62e" stroke="#c9a916" /><text x="9" y="22" fontSize="13" fontWeight="bold" fill="#222" fontFamily={sans}>ab</text></g>
          <path d="M26 15l3 7" stroke="#fff" strokeWidth="3" />
          <circle cx="29" cy="27" r="6.500" fill="#b81f22" />
        </Ic>
        <Ic dim><Tag t="ab" /><path d="M26 15l3 7" stroke="#fff" strokeWidth="3" /><circle cx="30" cy="29" r="7.500" fill="#b83034" /></Ic>
        <Ic dim><Tag /><path d="M13 30c6-8 17-8 23 0-6 6-17 6-23 0z" fill="#f0f0f0" stroke="#444" strokeWidth="1.500" /><circle cx="24.500" cy="29.500" r="4.500" fill="#5f8fc4" stroke="#345" /></Ic>
        <Ic dim><Tag /><Badge c="#3f6fb0"><path d="M2 7.700h9M7.500 3l5 4.700-5 4.700" stroke="#fff" strokeWidth="2.800" /></Badge></Ic>
        <Ic dim><Tag /><Badge c="#3f6fb0"><path d="M5 12c-2-3-1-7 3-8M11 5c1 3 0 7-4 7M8 2.500v4h4" stroke="#fff" strokeWidth="2" /></Badge></Ic>
        <Ic dim><Tag /><Badge c="#cba41a"><path d="M3.500 12.500l8-9" stroke="#fff" strokeWidth="3.400" /></Badge></Ic>
      </div>
      <Grip className="ml-[19px]" />
      <div className="mb-px ml-[6px] flex">
        <Ic>
          <path d="M2 13v22h17" stroke="#9a9a9a" strokeWidth="2" />
          <rect x="4" y="4" width="31" height="27" fill="#fff" stroke="#aaa" strokeWidth="1.500" />
          <text x="19.500" y="23.500" fontSize="14" textAnchor="middle" textLength="27" lengthAdjust="spacingAndGlyphs" fill="#3a3a3a" stroke="#3a3a3a" strokeWidth=".5" fontFamily="DejaVu Sans Mono, monospace">CSW</text>
        </Ic>
      </div>
      <Grip className="ml-[20px]" />
    </div>
  );
}

function SideToolbar() {
  return (
    <div className="flex w-[71px] shrink-0 flex-col items-start border-r border-[#b4b4b4] bg-linear-to-r from-[#efefef] to-[#c4c4c4] pt-[10px] pl-2">
      <HGrip />
      <div className="mt-[6px] ml-[7px] flex flex-col gap-[20.800px]">
        <Ic><V /><Plus /></Ic>
        <Ic>
          <path d="M0 0h31v31H0z" fill="#6a96cb" />
          <path d="M0 0h10.300v10.300H0zM20.600 0H31v10.300H20.600zM10.300 10.300h10.300v10.300H10.300zM0 20.600h10.300V31H0z" fill="#233d5c" />
          <Plus />
        </Ic>
        <Ic><Elephant /><Plus /></Ic>
        <Ic><Feather /><Plus /></Ic>
        <Ic><Shark /><Plus /></Ic>
        <Ic><GlobeLand /><Plus /></Ic>
        <Ic><GlobeDark /><Plus /></Ic>
        <Ic><GlobeGrid fill="#dfe8f2" /><g transform="translate(5 4) scale(.8)"><V c="#222f3c" /></g><Plus /></Ic>
        <Ic>
          <path d="M7 9c0-9 17-10 17 4 0 8-6 15-13 17l-1-3c4-2 6-5 6-9-5 1-9-3-9-9z" fill="#6a99cf" stroke="#35587a" strokeWidth="1.500" />
          <Plus />
        </Ic>
        <div className="relative">
          <Ic><V /><Star /></Ic>
          <Drop className="absolute top-[22px] left-[41px]" />
        </div>
      </div>
      <div className="mt-[19px]">
        <HGrip />
      </div>
    </div>
  );
}

/* ------------------------------------------------------------------ */
/* Docks                                                               */
/* ------------------------------------------------------------------ */

function DockTitle({ title, className }: { title: string; className: string }) {
  return (
    <div className={`relative flex shrink-0 items-center gap-[9px] border-b border-[#b4b4b4] bg-linear-to-b from-[#ededed] to-[#c6c6c6] ${className}`}>
      <svg className="block size-[22px]" viewBox="0 0 22 22">
        <circle cx="11" cy="11" r="10.500" fill="#474747" />
        <path d="M7 7l8 8M15 7l-8 8" stroke="#fff" strokeWidth="3" />
      </svg>
      <svg className="block size-[22px]" viewBox="0 0 22 22" fill="none">
        <circle cx="11" cy="11" r="10.500" fill="#474747" />
        <path d="M8.500 9V6.500h8V13H14M5.500 9.500h8V16h-8z" stroke="#e8e8e8" strokeWidth="1.600" />
      </svg>
      <span className="absolute inset-x-0 text-center text-[17px] leading-none text-[#222]">
        <span className="inline-block pl-[60px]">{title}</span>
      </span>
    </div>
  );
}

const Btn = ({ children, wide }: Kids & { wide?: boolean }) => (
  <div className={`flex h-[41px] items-center border-2 border-[#bdbdbd] bg-linear-to-b from-[#ebebeb] to-[#f6f6f6] ${wide ? "w-[96px] pl-[7px]" : "w-[40px] justify-center"}`}>{children}</div>
);

const Sm = ({ children, className = "" }: Kids & { className?: string }) => (
  <svg className={`block size-[25px] shrink-0 overflow-visible ${className}`} viewBox="0 0 38 38" fill="none">
    {children}
  </svg>
);

const Tri = ({ open, className = "" }: { open?: boolean; className?: string }) => (
  <svg className={`block size-[14px] shrink-0 ${className}`} viewBox="0 0 14 14" fill="#8a8a8a">
    {open ? <path d="M0 1.500h14L7 13z" /> : <path d="M1.500 0l11.500 7L1.500 14z" />}
  </svg>
);

const Folder = ({ home }: { home?: boolean }) => (
  <>
    <path d="M0 3h13l3 3h22v29H0z" fill={home ? "#6fa0ee" : "#66c8f4"} />
    <path d="M0 9h38v26H0z" fill={home ? "#8fb8f5" : "#6bcdf8"} />
    <path d="M0 8h38v4H0z" fill={home ? "#3a72c9" : "#5bc0ee"} />
    {home && <path d="M0 12h38v7H0z" fill="#6b9fec" />}
  </>
);

const browserRows: [string, boolean, React.ReactNode][] = [
  ["Home", true, <Folder home />],
  ["Favourites", true, <path d="M19 2l5 12 13 1-10 9 3.500 12L19 29 8 37l3-13L1 15l13-1z" fill="#f2f2ea" stroke="#b9bba6" strokeWidth="2.200" />],
  ["/", true, <Folder />],
  ["/Volumes", true, <Folder />],
  ["MSSQL", false, <Shark />],
  ["PostGIS", false, <g transform="scale(1.250 1.200)"><Elephant /></g>],
  ["SpatiaLite", false, <Feather />],
  ["OWS", false, <GlobeGrid fill="#f4f9ff" />],
  ["WCS", false, <GlobeDark />],
  ["WFS", false, <><GlobeGrid fill="#f4f9ff" /><g transform="translate(5 4) scale(.8)"><V c="#333" /></g></>],
  ["WMS", false, <GlobeLand />],
];

function BrowserDock() {
  return (
    <div className="flex h-[852px] flex-col bg-[#ebebeb]">
      <DockTitle title="Browser" className="h-[40px] pl-[5px]" />
      <div className="flex h-[49px] gap-2 pl-[8px]">
        <Btn><Sm><Refresh /></Sm></Btn>
        <Btn wide>
          <svg className="block size-[22px]" viewBox="0 0 22 22">
            <rect width="22" height="22" rx="4" fill="#568f56" />
            <path d="M11 4v14M4 11h14" stroke="#fff" strokeWidth="4.500" />
          </svg>
          <span className="ml-2 pb-[3px] text-[20px] leading-none">Add</span>
        </Btn>
        <Btn><Sm><Funnel /></Sm></Btn>
        <Btn><Sm><TreeIc up /></Sm></Btn>
      </div>
      <div className="flex-1 border-2 border-[#c0c0c0] bg-white">
        {browserRows.map(([name, tri, icon]) => (
          <div key={name} className="flex h-[27.800px] items-center">
            <div className="w-[38px] pl-[10px]">{tri && <Tri />}</div>
            <Sm>{icon}</Sm>
            <span className="ml-[9px] pb-[3px] text-[20px] leading-none">{name}</span>
          </div>
        ))}
      </div>
    </div>
  );
}

const Check = ({ on }: { on?: boolean }) => (
  <svg className="block size-[22px] shrink-0" viewBox="0 0 22 22" fill="none">
    <rect x=".5" y=".5" width="21" height="21" rx="4" fill={on ? "#3597fb" : "#fff"} />
    {on && <path d="M5.500 11.500l4 4.500L16.500 5.500" stroke="#fff" strokeWidth="2.300" />}
  </svg>
);

function Layer({ name, color, child, bold, shape, open, on = true, sel }: { name: string; color?: string; child?: boolean; bold?: boolean; shape?: boolean; open?: boolean; on?: boolean; sel?: boolean }) {
  return (
    <div className={`flex h-[30.900px] items-center ${sel ? "bg-[#0a50d0] text-white" : ""}`}>
      <div className={child ? "w-[72px] pl-[9px]" : "w-[42px] pl-[9px]"}>{open && <Tri open />}</div>
      <Check on={on} />
      {shape ? (
        <Sm className="ml-[19px]">
          <path d="M2 8c8-5 12 0 17-1S31 2 36 6s-2 8 1 14-4 11-10 8-10-2-15 2S0 25 3 19 0 11 2 8z" fill="#e2e2e2" stroke="#a8a8a8" strokeWidth="2" />
        </Sm>
      ) : (
        <div className={`size-[25px] shrink-0 border border-black/60 ${color} ${child ? "ml-[20px]" : "ml-[19px]"}`} />
      )}
      <span className={`ml-[9px] pb-[2px] text-[20px] leading-none whitespace-nowrap ${bold ? "font-bold" : ""} ${sel ? "underline decoration-2 underline-offset-2" : ""}`}>{name}</span>
    </div>
  );
}

function LayersDock() {
  return (
    <div className="flex flex-1 flex-col bg-[#ebebeb]">
      <DockTitle title="Layers" className="h-[40px] pl-[5px]" />
      <div className="flex h-[54px] gap-[12.500px] pl-[8px]">
        <Btn>
          <Sm>
            <path d="M1 16v20h20M7 10v20h20" stroke="#8a8a80" strokeWidth="2.500" />
            <path d="M13 5h20v20H13z" fill="#e9e9e0" stroke="#8a8a80" strokeWidth="2" />
            <path d="M20 18V6c0-5 6-5 6 0v17c0 4-5 4-6 0" stroke="#3d6fae" strokeWidth="2.500" />
          </Sm>
        </Btn>
        <Btn>
          <Sm>
            <path d="M0 17C8 5 26 5 33 16M2 18c8 8 20 9 30 1M4 9C12 2 24 2 32 8" stroke="#9a9a9a" strokeWidth="2" />
            <circle cx="18" cy="16" r="7" fill="#7fa6d0" />
            <circle cx="18" cy="16" r="3" fill="#234" />
            <path d="M24 27h16l-8 11z" fill="#111" />
          </Sm>
        </Btn>
        <Btn><Sm><Funnel /></Sm></Btn>
        <Btn><Sm><TreeIc /></Sm></Btn>
        <Btn><Sm><TreeIc up /></Sm></Btn>
        <Btn>
          <Sm>
            <path d="M4 4h30v31H4z" fill="#eeeeec" stroke="#b5b5ac" strokeWidth="2" />
            <rect x="26" y="26" width="14" height="13" fill="#ee4a50" />
            <path d="M28 32.500h10" stroke="#fff" strokeWidth="4" />
          </Sm>
        </Btn>
      </div>
      <div className="relative z-10 -mr-[3px] -mb-[3px] -ml-[2px] flex-1 rounded-[3px] border-4 border-[#4b9ff1] bg-white">
        <Layer name="morans output" color="bg-[#c9b862]" bold on={false} sel />
        <Layer name="/var/folders/r0/yh2mjk9547b8ytn…" shape bold open />
        <Layer name="not. sig" color="bg-white" child />
        <Layer name="HH" color="bg-[#cc0000]" child />
        <Layer name="LH" color="bg-[#66ccff]" child />
        <Layer name="LL" color="bg-[#000099]" child />
        <Layer name="HL" color="bg-[#f4cccc]" child />
        <Layer name="south" color="bg-[#cdb53c]" bold />
      </div>
    </div>
  );
}

type Item = { t: string; tri?: "open" | "shut"; pad: string; icon?: "gear" | "model" | "script"; h: string; gap: string; sel?: boolean };

const L0 = "pl-[9px]";
const L1 = "pl-[40px]";
const leaf1 = "pl-[70px]";
const leaf2 = "pl-[101px]";
const tall = "h-[27.800px]";
const low = "h-[23.400px]";

const tools: Item[] = [
  { t: "Recently used algorithms", tri: "open", pad: L0, h: "h-[23.500px]", gap: "ml-[16px]" },
  { t: "choropleth", pad: leaf1, icon: "gear", h: tall, gap: "ml-[13px]" },
  { t: "neighbors", pad: leaf1, icon: "gear", h: tall, gap: "ml-[13px]" },
  { t: "local morans map", pad: leaf1, icon: "gear", h: tall, gap: "ml-[13px]" },
  { t: "Geoalgorithms", tri: "shut", pad: L0, icon: "gear", h: tall, gap: "ml-[12px]" },
  { t: "Models [0 geoalgorithms]", tri: "shut", pad: L0, icon: "model", h: tall, gap: "ml-[9px]" },
  { t: "Scripts [8 geoalgorithms]", tri: "open", pad: L0, icon: "script", h: tall, gap: "ml-[8px]" },
  { t: "Inequality", tri: "shut", pad: L1, h: low, gap: "ml-[15px]" },
  { t: "Spatial statistics", tri: "open", pad: L1, h: low, gap: "ml-[15px]" },
  { t: "choropleth", pad: leaf2, icon: "gear", h: tall, gap: "ml-[12px]" },
  { t: "local g", pad: leaf2, icon: "gear", h: tall, gap: "ml-[12px]" },
  { t: "local morans", pad: leaf2, icon: "gear", h: tall, gap: "ml-[12px]" },
  { t: "local morans map", pad: leaf2, icon: "gear", h: tall, gap: "ml-[12px]", sel: true },
  { t: "neighbors", pad: leaf2, icon: "gear", h: tall, gap: "ml-[12px]" },
  { t: "Tools", tri: "shut", pad: L1, h: low, gap: "ml-[15px]" },
  { t: "User scripts", tri: "shut", pad: L1, h: low, gap: "ml-[15px]" },
];

function ToolIcon({ kind, light }: { kind: string; light?: boolean }) {
  if (kind === "gear") return <Gear light={light} />;
  if (kind === "model")
    return (
      <svg className="block h-[24px] w-[24px] shrink-0" viewBox="0 0 24 24">
        <path d="M5 13l11-7M5 13l13 5" stroke="#333" strokeWidth="4" />
        <ellipse cx="6" cy="13" rx="5.500" ry="4" fill="#555" />
        <circle cx="16" cy="6" r="5.500" fill="#3c78ea" />
        <circle cx="18" cy="18" r="5.500" fill="#ee2020" />
        <circle cx="15" cy="4.500" r="2" fill="#a9c6fa" />
        <circle cx="17" cy="16.500" r="2" fill="#ff9a9a" />
      </svg>
    );
  return (
    <svg className="block h-[25px] w-[25px] shrink-0" viewBox="0 0 24 24" fill="none">
      <rect x=".5" y=".5" width="23" height="23" rx="3" fill="#b9bbb0" stroke="#6f7168" />
      <rect x="3.500" y="3.500" width="17" height="16.500" fill="#2d3a23" stroke="#11180c" />
      <path d="M6 7.500l4 3.500-4 3.500M11 15h5" stroke="#c3cfb0" strokeWidth="1.500" />
    </svg>
  );
}

function ToolboxDock() {
  return (
    <div className="flex w-[395px] shrink-0 flex-col bg-[#ebebeb]">
      <DockTitle title="Processing Toolbox" className="h-[40px] pl-[5px]" />
      <div className="mt-px mr-[4px] ml-[4px] flex h-[34px] items-center border-2 border-[#c6c6c6] bg-white pl-1 text-[20px] leading-none text-[#8a8a8a]"><span className="pb-[2px]">Search...</span></div>
      <div className="mt-[6px] mr-[4px] ml-[4px] h-[1116px] border-2 border-t-[1.500px] border-[#c0c0c0] border-t-[#8e8e8e] bg-white">
        {tools.map((r, i) => (
          <div key={i} className={`flex items-center ${r.h} ${r.pad} ${r.sel ? "bg-[#0a50d0] text-white" : ""}`}>
            {r.tri && <Tri open={r.tri === "open"} className={r.icon ? "mr-[17px]" : ""} />}
            {r.icon && <ToolIcon kind={r.icon} light={r.sel} />}
            <span className={`pb-px text-[20px] leading-none whitespace-nowrap ${r.gap}`}>{r.t}</span>
          </div>
        ))}
      </div>
      <div className="mt-[3px] mr-[3px] ml-[4px] flex h-[33px] items-center justify-between overflow-hidden rounded-[4px] border border-[#c4c4c4] bg-white pl-[11px] text-[20px] leading-none">
        <span className="pb-[3px]">Simplified interface</span>
        <svg className="block h-[33px] w-[27px]" viewBox="0 0 27 32" fill="none">
          <path d="M0 0h27v32H0z" fill="#3b93f7" />
          <path d="M8.500 13l5-5.500 5 5.500M8.500 19l5 5.500 5-5.500" stroke="#fff" strokeWidth="2.400" />
        </svg>
      </div>
    </div>
  );
}

export default function App() {
  return (
    <div className="h-[1604px] w-[2336px] overflow-hidden bg-white font-['Liberation_Sans',Arial,sans-serif] text-[#111]">
      <header className="h-[222px] pt-[14px] pl-[26px]">
        <h1 className="inline-block origin-left scale-x-[0.905] font-['Open_Sans',sans-serif] text-[91px] leading-[130px] font-[350] whitespace-nowrap text-[#3035ad] [-webkit-text-stroke:0.7px_#3035ad] [word-spacing:12px]">
          <span className="tracking-[3px]">QGIS</span> Processing
        </h1>
      </header>
      <main className="ml-[42px] flex h-[1363px] w-[2241px] flex-col bg-[#ebebeb]">
        <div className="h-[3px] shrink-0 bg-[#bfbfbf]" />
        <MainToolbar />
        <div className="h-px shrink-0 bg-[#b0b0b0]" />
        <EditToolbar />
        <div className="flex h-[1238px] shrink-0">
          <SideToolbar />
          <div className="flex w-[454px] shrink-0 flex-col">
            <BrowserDock />
            <LayersDock />
          </div>
          <div className="w-[1321px] shrink-0 overflow-hidden border-x-3 border-t-2 border-b border-[#9d9d9d] bg-white">
            <SouthMap />
          </div>
          <ToolboxDock />
        </div>
        <div className="flex flex-1 items-end">
          <div className="ml-[1041px] h-[3px] w-[32px] bg-[#c8c8c8]" />
          <div className="ml-[132px] h-[3px] w-[464px] bg-[#cfcfcf]" />
          <div className="ml-[460px] h-[3px] w-[34px] bg-[#dcdcdc]" />
          <div className="ml-[8px] h-[3px] w-[30px] bg-[#c8c8c8]" />
        </div>
      </main>
    </div>
  );
}
